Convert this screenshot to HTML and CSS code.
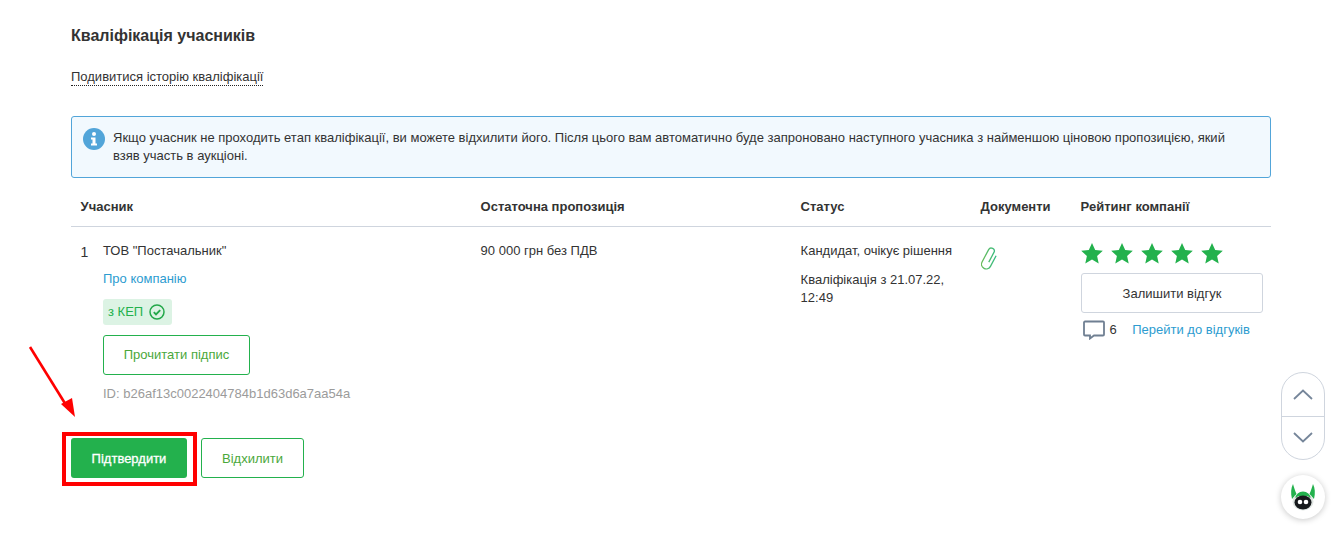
FILE: index.html
```html
<!DOCTYPE html>
<html lang="uk">
<head>
<meta charset="utf-8">
<title>Кваліфікація учасників</title>
<link rel="stylesheet" href="styles.css">
</head>
<body>
<main class="page">
  <h2 class="title">Кваліфікація учасників</h2>
  <div class="history"><a class="history-link">Подивитися історію кваліфікації</a></div>
  <div class="notice">
    <svg class="notice-icon" viewBox="0 0 22 22" width="22" height="22"><circle cx="11" cy="11" r="11" fill="#52a5d9"/><circle cx="11" cy="6" r="2" fill="#fff"/><path d="M8 9.500h4.500v6H14v2H8v-2h1.500v-4H8z" fill="#fff"/></svg>
    <p class="notice-text">Якщо учасник не проходить етап кваліфікації, ви можете відхилити його. Після цього вам автоматично буде запроновано наступного учасника з найменшою ціновою пропозицією, який взяв участь в аукціоні.</p>
  </div>
  <div class="table">
    <div class="row head">
      <div>Учасник</div>
      <div>Остаточна пропозиція</div>
      <div>Статус</div>
      <div>Документи</div>
      <div>Рейтинг компанії</div>
    </div>
    <div class="row body">
      <div class="participant">
        <div class="num">1</div>
        <div class="info">
          <div class="company">ТОВ "Постачальник"</div>
          <a class="about">Про компанію</a>
          <div class="kep">з КЕП
            <svg viewBox="0 0 16 16" width="16" height="16"><circle cx="8" cy="8" r="7" fill="none" stroke="#23a84a" stroke-width="1.500"/><path d="M4.800 8.200l2.200 2.200 4.200-4.200" fill="none" stroke="#23a84a" stroke-width="1.900"/></svg>
          </div>
          <button class="btn outline read">Прочитати підпис</button>
          <div class="id">ID: b26af13c0022404784b1d63d6a7aa54a</div>
        </div>
      </div>
      <div class="price">90 000 грн без ПДВ</div>
      <div class="status">
        <div>Кандидат, очікує рішення</div>
        <div class="qual">Кваліфікація з 21.07.22, 12:49</div>
      </div>
      <div class="docs">
        <svg viewBox="0 0 24 28" width="24" height="28"><defs><linearGradient id="clip" x1="0" y1="1" x2="1" y2="0"><stop offset="0" stop-color="#6fbb55"/><stop offset="1" stop-color="#2dbb88"/></linearGradient></defs><path d="M15.500 8V20a4.750 4.750 0 0 1-9.500 0V6a3 3 0 0 1 6 0V17" transform="translate(-2.200 0) rotate(28 10.750 13)" fill="none" stroke="url(#clip)" stroke-width="1.300"/></svg>
      </div>
      <div class="rating">
        <div class="stars">
          <svg viewBox="0 0 22 21" width="22" height="21"><path d="M11 0l3.200 7 7.600.8-5.700 5.100 1.600 7.500L11 16.600l-6.700 3.800 1.600-7.500L.2 7.800 7.800 7z" fill="#23b14d"/></svg>
          <svg viewBox="0 0 22 21" width="22" height="21"><path d="M11 0l3.200 7 7.600.8-5.700 5.100 1.600 7.500L11 16.600l-6.700 3.800 1.600-7.500L.2 7.800 7.800 7z" fill="#23b14d"/></svg>
          <svg viewBox="0 0 22 21" width="22" height="21"><path d="M11 0l3.200 7 7.600.8-5.700 5.100 1.600 7.500L11 16.600l-6.700 3.800 1.600-7.500L.2 7.800 7.800 7z" fill="#23b14d"/></svg>
          <svg viewBox="0 0 22 21" width="22" height="21"><path d="M11 0l3.200 7 7.600.8-5.700 5.100 1.600 7.500L11 16.600l-6.700 3.800 1.600-7.500L.2 7.800 7.800 7z" fill="#23b14d"/></svg>
          <svg viewBox="0 0 22 21" width="22" height="21"><path d="M11 0l3.200 7 7.600.8-5.700 5.100 1.600 7.500L11 16.600l-6.700 3.800 1.600-7.500L.2 7.800 7.800 7z" fill="#23b14d"/></svg>
        </div>
        <button class="btn review">Залишити відгук</button>
        <div class="reviews">
          <svg viewBox="0 0 22 20" width="22" height="20"><path d="M2 1.500h18a1 1 0 0 1 1 1v12a1 1 0 0 1-1 1H11l-4 3v-3H2a1 1 0 0 1-1-1v-12a1 1 0 0 1 1-1z" fill="none" stroke="#6f7f92" stroke-width="1.800"/></svg>
          <span class="count">6</span>
          <a class="to-reviews">Перейти до відгуків</a>
        </div>
      </div>
    </div>
  </div>
  <div class="actions">
    <div class="confirm"><button class="btn primary">Підтвердити</button><span class="highlight"></span></div>
    <button class="btn outline reject">Відхилити</button>
  </div>
</main>
<svg class="arrow" viewBox="0 0 60 80" width="60" height="80"><path d="M2 1L38 59" stroke="#f00" stroke-width="2.600" fill="none"/><path d="M47 71L33 58l11-6z" fill="#f00"/></svg>
<div class="scroller">
  <button class="scroll-btn"><svg viewBox="0 0 20 11" width="20" height="11"><path d="M1 10l9-8.500L19 10" fill="none" stroke="#76869a" stroke-width="1.800"/></svg></button>
  <button class="scroll-btn lower"><svg viewBox="0 0 20 11" width="20" height="11"><path d="M1 1l9 8.500L19 1" fill="none" stroke="#76869a" stroke-width="1.800"/></svg></button>
</div>
<div class="bot">
  <svg viewBox="0 0 28 28" width="28" height="28">
    <path d="M4 1C2 5 1.500 10 3 16l4.500-5C6 8 5 4 4 1zM24 1c2 4 2.500 9 1 15l-4.500-5C22 8 23 4 24 1z" fill="#23b14d"/>
    <ellipse cx="14" cy="18.500" rx="10.500" ry="9" fill="#dfe5e2"/>
    <path d="M6.500 15a7.500 6.500 0 0 1 15 0l-3-2h-9z" fill="#23b14d"/>
    <ellipse cx="14" cy="19.500" rx="8.500" ry="7" fill="#16191c"/>
    <circle cx="11" cy="19" r="2.300" fill="#fff"/><circle cx="17" cy="19" r="2.300" fill="#fff"/>
  </svg>
</div>
</body>
</html>
```
FILE: styles.css
```css
* { box-sizing: border-box; }
html, body { margin: 0; padding: 0; }
body {
  height: 545px;
  overflow: hidden;
  background: #fff;
  color: #333;
  font-family: "Liberation Sans", Arial, sans-serif;
  font-size: 13px;
  line-height: 18px;
}
.page { width: 1200px; margin-left: 71px; padding-top: 27px; }
.title { margin: 0; font-size: 16px; line-height: 18px; font-weight: 700; color: #333; }
.history { margin-top: 23px; height: 18px; }
.history-link { color: #333; border-bottom: 1px dotted #222; display: inline-block; line-height: 17px; height: 18px; }
.notice {
  margin-top: 30px;
  height: 62px;
  display: flex;
  gap: 8px;
  padding: 11px 30px 11px 11px;
  background: #f2f9fe;
  border: 1px solid #52a5d9;
  border-radius: 3px;
}
.notice-icon { flex: none; }
.notice-text { margin: 0; line-height: 18px; padding-top: 1px; }
.row { display: grid; grid-template-columns: 400px 320px 180px 100px 190px; padding-left: 9.600px; }
.head { height: 49px; padding-top: 10px; align-items: center; font-weight: 700; border-bottom: 1px solid #cfd5de; }
.body { padding-top: 14px; }
.participant { display: flex; }
.num { width: 22.400px; font-size: 14px; padding-top: 2px; }
.info { padding-top: 1px; }
.about { display: block; margin-top: 10px; color: #2d9cd0; }
.kep {
  margin-top: 11px;
  display: flex;
  align-items: center;
  gap: 6px;
  width: 69px;
  height: 26px;
  padding-left: 5px;
  background: #dcf3e4;
  border-radius: 3px;
  color: #23b14d;
}
.btn {
  display: block;
  font-family: inherit;
  font-size: 13px;
  border-radius: 3px;
  background: #fff;
  cursor: pointer;
  padding: 0;
}
.outline { border: 1px solid #23b14d; color: #4aa83a; }
.read { margin-top: 10px; width: 147px; height: 40px; padding-bottom: 2px; }
.id { margin-top: 10px; color: #9b9b9b; }
.price, .status { padding-top: 1px; }
.qual { margin-top: 11px; width: 160px; }
.docs { padding-top: 4px; }
.stars { display: flex; gap: 8px; height: 21px; padding-top: 1px; margin-left: .4px; }
.stars svg { flex: none; }
.rating { padding-top: 1px; }
.review { margin-top: 10px; margin-left: .4px; width: 182px; height: 40px; border: 1px solid #cfd5de; color: #333; }
.reviews { display: flex; align-items: center; margin-top: 5px; margin-left: 2px; height: 24px; }
.count { margin-left: 5px; }
.to-reviews { margin-left: 15.400px; color: #2d9cd0; }
.actions { display: flex; gap: 14px; margin-top: 35px; }
.confirm { position: relative; }
.highlight { position: absolute; left: -9px; top: -6px; width: 135px; height: 54px; border: 4px solid #f00; }
.primary { width: 116px; height: 40px; background: #23b14d; border: none; color: #fff; -webkit-text-stroke: 0.3px #fff; }
.reject { width: 103px; height: 40px; }
.arrow { position: absolute; left: 28px; top: 346px; }
.scroller {
  position: absolute; left: 1281px; top: 372px; width: 44px; height: 88px;
  border: 1px solid #cfd5de; border-radius: 22px; background: #fff;
  display: flex; flex-direction: column;
}
.scroll-btn { flex: 1; border: none; background: none; padding: 0; display: flex; align-items: center; justify-content: center; }
.lower { border-top: 1px solid #cfd5de; }
.bot {
  position: absolute; left: 1281px; top: 475px; width: 44px; height: 44px; border-radius: 50%;
  background: #fff; box-shadow: 0 1px 6px rgba(0,0,0,.22);
  display: flex; align-items: center; justify-content: center;
}
```
